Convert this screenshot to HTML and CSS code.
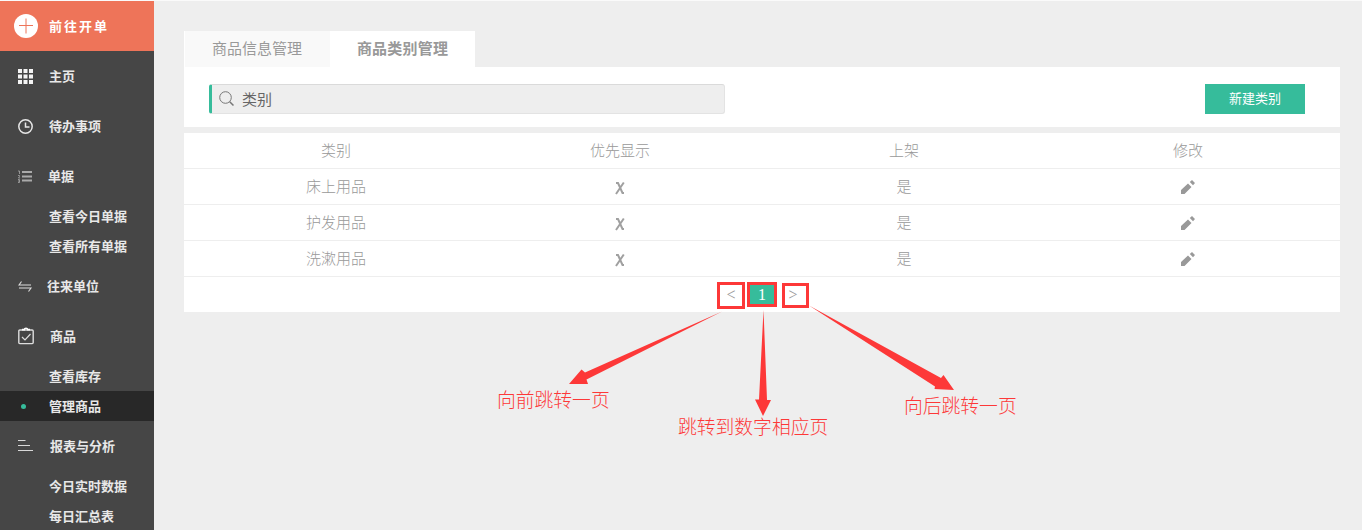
FILE: index.html
```html
<!DOCTYPE html>
<html lang="zh-CN">
<head>
<meta charset="utf-8">
<title>商品类别管理</title>
<link rel="stylesheet" href="styles.css">
</head>
<body>
<div class="app">
  <nav class="sidebar">
    <a class="nav-item order">
      <svg class="icon" width="24" height="24" viewBox="0 0 24 24"><circle cx="12" cy="12" r="12" fill="#fff"/><path d="M12 4.500v15M5 11.500h14" stroke="#ee7459" stroke-width="1"/></svg>
      <span>前往开单</span>
    </a>
    <a class="nav-item">
      <svg class="icon" width="16" height="16" viewBox="0 0 16 16" fill="#f4f4f4"><path d="M0 1h4v4H0zM5.500 1h4v4h-4zM11 1h4v4h-4zM0 6.500h4v4H0zM5.500 6.500h4v4h-4zM11 6.500h4v4h-4zM0 12h4v4H0zM5.500 12h4v4h-4zM11 12h4v4h-4z"/></svg>
      <span>主页</span>
    </a>
    <a class="nav-item">
      <svg class="icon" width="16" height="16" viewBox="0 0 16 16" fill="none" stroke="#e6e6e6" stroke-width="1.5"><circle cx="7.5" cy="8.5" r="6.7"/><path d="M7.5 4.5v4.5h4"/></svg>
      <span>待办事项</span>
    </a>
    <a class="nav-item shift-1">
      <svg class="icon" width="16" height="16" viewBox="0 0 16 16" fill="none" stroke="#aaa"><path d="M4 4h10M4 8.500h10M4 12.500h10" stroke-width="1.800"/><path d="M0 3h1.500v3M0 7.500h1.500v1L.5 10h1.500M0 11.500h1.500v3H0M0 13h1.500" stroke-width=".8"/></svg>
      <span>单据</span>
    </a>
    <a class="nav-item sub"><span>查看今日单据</span></a>
    <a class="nav-item sub"><span>查看所有单据</span></a>
    <a class="nav-item shift-2">
      <svg class="icon" width="16" height="16" viewBox="0 0 16 16" fill="none" stroke="#ddd" stroke-width="1.1"><path d="M3.500 3.500L1 7h12M1 10h12L10.500 13.500"/></svg>
      <span>往来单位</span>
    </a>
    <a class="nav-item shift-right">
      <svg class="icon" width="16" height="18" viewBox="0 0 16 18" fill="none" stroke="#ddd" stroke-width="1.400"><rect x=".8" y="3" width="14.400" height="13.600" rx="1"/><path d="M4 10l3 3 5.500-6" stroke-width="1.200"/><path d="M4 2.600h2.300C6.600.8 9.400.8 9.700 2.600H12" stroke="#fff" stroke-width="1.600"/></svg>
      <span>商品</span>
    </a>
    <a class="nav-item sub"><span>查看库存</span></a>
    <a class="nav-item sub active"><i class="dot"></i><span>管理商品</span></a>
    <a class="nav-item shift-right">
      <svg class="icon" width="16" height="16" viewBox="0 0 16 16" stroke="#d8d8d8" stroke-width="1.200"><path d="M0 2.500h7.500M0 7.500h12M0 12.500h15"/></svg>
      <span>报表与分析</span>
    </a>
    <a class="nav-item sub"><span>今日实时数据</span></a>
    <a class="nav-item sub"><span>每日汇总表</span></a>
  </nav>

  <main class="content">
    <div class="tabs">
      <a class="tab">商品信息管理</a>
      <a class="tab selected">商品类别管理</a>
    </div>
    <section class="toolbar">
      <div class="search">
        <svg width="16" height="16" viewBox="0 0 16 16" fill="none" stroke="#777"><circle cx="6.500" cy="6.500" r="5.800"/><path d="M10.700 10.700L14.500 14.500" stroke-width="1.500"/></svg>
        <span>类别</span>
      </div>
      <button class="create">新建类别</button>
    </section>
    <section class="table">
      <div class="row"><span>类别</span><span>优先显示</span><span>上架</span><span>修改</span></div>
      <div class="row"><span>床上用品</span><span><svg class="cross" width="10" height="14" viewBox="0 0 10 14"><path d="M1 2h2L7.500 12h1.500M8.800 1.500L1 13"/></svg></span><span>是</span><span><svg class="pencil" width="16" height="16" viewBox="0 0 16 16"><path d="M1 15v-4L8 4.500 11.500 8 4.500 15zM9.800 3L12 1l3 3-2 2.200z"/></svg></span></div>
      <div class="row"><span>护发用品</span><span><svg class="cross" width="10" height="14" viewBox="0 0 10 14"><path d="M1 2h2L7.500 12h1.500M8.800 1.500L1 13"/></svg></span><span>是</span><span><svg class="pencil" width="16" height="16" viewBox="0 0 16 16"><path d="M1 15v-4L8 4.500 11.500 8 4.500 15zM9.800 3L12 1l3 3-2 2.200z"/></svg></span></div>
      <div class="row"><span>洗漱用品</span><span><svg class="cross" width="10" height="14" viewBox="0 0 10 14"><path d="M1 2h2L7.500 12h1.500M8.800 1.500L1 13"/></svg></span><span>是</span><span><svg class="pencil" width="16" height="16" viewBox="0 0 16 16"><path d="M1 15v-4L8 4.500 11.500 8 4.500 15zM9.800 3L12 1l3 3-2 2.200z"/></svg></span></div>
      <div class="pager">
        <a class="page prev">&lt;</a>
        <a class="page current">1</a>
        <a class="page next">&gt;</a>
      </div>
    </section>
  </main>

  <svg class="arrows" width="1362" height="530" viewBox="0 0 1362 530" fill="#fd3838">
    <path d="M722 311.500L585 372.500 581.500 369.500 569 384H588L586.500 379.500z"/>
    <path d="M763.500 310L759 399.500H755L763 416 771 400H767z"/>
    <path d="M809 305.500L935 386.500 934.500 389 954 390 943.500 375 941 378z"/>
  </svg>
  <p class="note note-prev">向前跳转一页</p>
  <p class="note note-number">跳转到数字相应页</p>
  <p class="note note-next">向后跳转一页</p>
</div>
</body>
</html>
```
FILE: styles.css
```css
* { box-sizing: border-box; }
body {
  margin: 0;
  background: #eee;
  font-family: "Liberation Sans", "Noto Sans CJK SC", sans-serif;
  overflow: hidden;
}
.app {
  position: relative;
  display: flex;
  height: 530px;
  border-top: 1px solid #fafafa;
  overflow: hidden;
}
.sidebar {
  flex: none;
  width: 154px;
  height: 530px;
  background: #464646;
}
.nav-item {
  display: flex;
  align-items: center;
  height: 50px;
  padding-left: 18px;
  color: #e8e8e8;
  font-size: 13px;
  font-weight: 700;
  line-height: 20px;
  white-space: nowrap;
}
.nav-item span { padding-top: 1px; }
.icon { flex: none; display: block; }
.nav-item .icon { margin-right: 15px; }
.nav-item.order {
  padding-left: 14px;
  background: #ee7459;
  color: #fff;
  letter-spacing: 2px;
}
.order .icon { margin-right: 11px; }
.nav-item.shift-1 .icon { margin-right: 14px; }
.nav-item.shift-2 .icon { margin-right: 13px; }
.nav-item.shift-right .icon { margin-right: 16px; }
.nav-item.sub { height: 30px; padding-left: 49px; }
.nav-item.active { padding-left: 21px; background: #282828; }
.dot {
  width: 5px;
  height: 5px;
  margin-right: 23px;
  border-radius: 50%;
  background: #36bc9b;
}
.content { width: 1156px; margin: 30px 0 0 30px; }
.tabs { display: flex; height: 36px; }
.tab {
  width: 146px;
  padding-right: 1px;
  border-left: 1px solid #fff;
  background: #f9f9f9;
  color: #999;
  font-size: 15px;
  line-height: 35px;
  text-align: center;
}
.tab.selected {
  width: 145px;
  background: #fff;
  font-weight: 700;
  letter-spacing: .2px;
}
.toolbar {
  display: flex;
  align-items: center;
  justify-content: space-between;
  height: 60px;
  padding: 3px 35px 0 25px;
  background: #fff;
}
.search {
  display: flex;
  align-items: center;
  gap: 7px;
  width: 516px;
  height: 30px;
  padding-left: 7px;
  border: 1px solid #e3e3e3;
  border-top-color: #dadada;
  border-left: 3px solid #36bc9b;
  border-radius: 3px;
  background: #eee;
  color: #666;
  font-size: 15px;
}
.create {
  width: 100px;
  height: 30px;
  padding: 0;
  border: 0;
  background: #36bc9b;
  color: #fff;
  font: 13px/30px "Liberation Sans", "Noto Sans CJK SC", sans-serif;
}
.table { height: 179px; margin-top: 6px; background: #fff; }
.row {
  display: grid;
  grid-template-columns: repeat(4, 284px);
  height: 36px;
  padding: 0 10px;
  border-bottom: 1px solid #eee;
  color: #999;
  font-size: 15px;
  font-weight: 300;
  line-height: 36px;
  text-align: center;
}
.cross { fill: none; stroke: #a0a0a0; stroke-width: 2; vertical-align: -3px; }
.pencil { fill: #999; vertical-align: -3px; }
.pager { display: flex; align-items: flex-start; padding: 5px 0 0 533px; }
.page {
  border: 3px solid #fd3838;
  color: #999;
  font: 16px/20px "Liberation Serif", serif;
  text-align: center;
}
.prev { width: 28px; height: 27px; margin-right: 2px; }
.current {
  width: 30px;
  height: 25px;
  margin-right: 5px;
  background: #36bc9b;
  color: #fff;
}
.next { width: 27px; height: 25px; margin-top: 1px; padding-right: 5px; line-height: 18px; }
.arrows { position: absolute; left: 0; top: -1px; }
.note {
  position: absolute;
  margin: 0;
  color: #fd3838;
  font-size: 18.8px;
  font-weight: 300;
  line-height: 28px;
  white-space: nowrap;
}
.note-prev { left: 497px; top: 386px; }
.note-number { left: 678px; top: 413px; }
.note-next { left: 904px; top: 392px; }
```
